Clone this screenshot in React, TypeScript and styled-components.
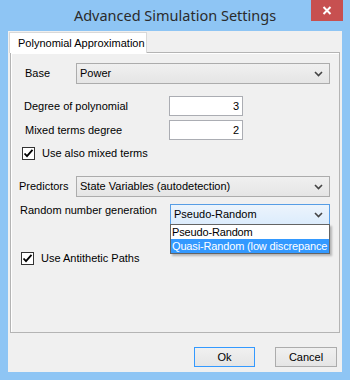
import React from "react";
import styled, { createGlobalStyle } from "styled-components";

const Global = createGlobalStyle`
  html, body { margin: 0; padding: 0; background: #8cc4f4; }
  body { font-family: "Liberation Sans", Arial, sans-serif; font-size: 11px; color: #000; }
  * { box-sizing: border-box; }
`;

const Window = styled.div`
  width: 350px;
  height: 380px;
  background: #8ec5f4;
  padding: 0 8px 8px 8px;
  display: flex;
  flex-direction: column;
`;

const TitleBar = styled.div`
  height: 31px;
  display: grid;
  grid-template-columns: 32px 1fr 32px;
  align-items: start;
`;

const Title = styled.div`
  grid-column: 2;
  text-align: center;
  font-family: "Noto Sans", "Open Sans", sans-serif;
  font-size: 14.5px;
  line-height: 20px;
  padding-top: 5px;
  color: #2b2b2b;
  white-space: nowrap;
`;

const CloseButton = styled.div`
  grid-column: 3;
  height: 21px;
  width: 32px;
  margin-left: 1px;
  background: #c75050;
  display: flex;
  align-items: center;
  justify-content: center;
`;

const Client = styled.div`
  flex: 1;
  background: #f0f0f0;
  display: flex;
  flex-direction: column;
  padding: 1px 2px 5px 1px;
`;

const TabStrip = styled.div`
  display: flex;
  position: relative;
  z-index: 1;
  margin-bottom: -1px;
`;

const Tab = styled.div`
  width: 138px;
  height: 21px;
  background: #fff;
  border: 1px solid #d9d9d9;
  border-bottom: none;
  padding: 3px 0 0 8px;
  line-height: 14px;
`;

const Panel = styled.div`
  flex: 1;
  margin-left: 1px;
  border: 1px solid #b4b4b4;
  background: #f0f0f0;
  display: flex;
  flex-direction: column;
  box-shadow: inset 1px 1px 0 #fff;
`;

const Row = styled.div<{ $top: number; $left: number; $align?: string }>`
  display: flex;
  align-items: ${(p) => p.$align || "center"};
  margin-top: ${(p) => p.$top}px;
  padding-left: ${(p) => p.$left}px;
  padding-right: 9px;
`;

const Label = styled.div<{ $w: number }>`
  width: ${(p) => p.$w}px;
  flex: none;
  line-height: 13px;
  white-space: nowrap;
`;

const Combo = styled.div<{ $focused?: boolean }>`
  position: relative;
  flex: 1;
  height: 21px;
  border: 1px solid ${(p) => (p.$focused ? "#569de5" : "#acacac")};
  background: ${(p) =>
    p.$focused
      ? "linear-gradient(#ecf4fc, #dcecfc)"
      : "linear-gradient(#f0f0f0, #e5e5e5)"};
  display: flex;
  align-items: center;
  padding: 0 6px 0 3px;
`;

const ComboText = styled.div`
  flex: 1;
  white-space: nowrap;
  overflow: hidden;
  line-height: 13px;
`;

const DropList = styled.div`
  position: absolute;
  top: 100%;
  left: -1px;
  right: -1px;
  border: 1px solid #646464;
  background: #fff;
  box-shadow: 2px 2px 2px rgba(0, 0, 0, 0.25);
  z-index: 2;
`;

const DropItem = styled.div<{ $selected?: boolean }>`
  height: 14px;
  line-height: 14px;
  padding-left: 1px;
  white-space: nowrap;
  overflow: hidden;
  letter-spacing: -0.15px;
  background: ${(p) => (p.$selected ? "#3399ff" : "#fff")};
  color: ${(p) => (p.$selected ? "#fff" : "#000")};
`;

const TextBox = styled.div`
  width: 74px;
  height: 20px;
  border: 1px solid #abadb3;
  background: #fff;
  text-align: right;
  padding: 3px 3px 0 0;
  line-height: 13px;
`;

const CheckBox = styled.div`
  width: 13px;
  height: 13px;
  border: 1px solid #333;
  background: #fff;
  flex: none;
  display: flex;
  align-items: center;
  justify-content: center;
  margin-right: 7px;
`;

const ButtonRow = styled.div`
  display: flex;
  justify-content: flex-end;
  gap: 20px;
  margin-top: 14px;
  padding-right: 3px;
`;

const Button = styled.div<{ $w: number; $default?: boolean }>`
  width: ${(p) => p.$w}px;
  height: 20px;
  border: 1px solid ${(p) => (p.$default ? "#3399ff" : "#acacac")};
  background: linear-gradient(#f0f0f0, #e5e5e5);
  display: flex;
  align-items: center;
  justify-content: center;
  line-height: 13px;
`;

const Chevron = () => (
  <svg width="9" height="6" viewBox="0 0 9 6">
    <polyline points="1,1 4.5,4.5 8,1" fill="none" stroke="#444" strokeWidth="1.6" />
  </svg>
);

const Check = () => (
  <svg width="11" height="11" viewBox="0 0 11 11">
    <path d="M1.5 5.5 L4 8.2 L9.5 1.8" fill="none" stroke="#000" strokeWidth="1.8" />
  </svg>
);

export default function App() {
  return (
    <>
      <Global />
      <Window>
        <TitleBar>
          <Title>Advanced Simulation Settings</Title>
          <CloseButton>
            <svg width="10" height="9" viewBox="0 0 10 9">
              <path d="M1.5 1 L8.5 8 M8.5 1 L1.5 8" stroke="#fff" strokeWidth="2" />
            </svg>
          </CloseButton>
        </TitleBar>
        <Client>
          <TabStrip>
            <Tab>Polynomial Approximation</Tab>
          </TabStrip>
          <Panel>
            <Row $top={10} $left={14}>
              <Label $w={51}>Base</Label>
              <Combo>
                <ComboText>Power</ComboText>
                <Chevron />
              </Combo>
            </Row>
            <Row $top={12} $left={13}>
              <Label $w={145}>Degree of polynomial</Label>
              <TextBox>3</TextBox>
            </Row>
            <Row $top={4} $left={14}>
              <Label $w={144}>Mixed terms degree</Label>
              <TextBox>2</TextBox>
            </Row>
            <Row $top={7} $left={11}>
              <CheckBox>
                <Check />
              </CheckBox>
              <Label $w={200}>Use also mixed terms</Label>
            </Row>
            <Row $top={16} $left={8}>
              <Label $w={57}>Predictors</Label>
              <Combo>
                <ComboText>State Variables (autodetection)</ComboText>
                <Chevron />
              </Combo>
            </Row>
            <Row $top={7} $left={9} $align="flex-start">
              <Label $w={150}>Random number generation</Label>
              <Combo $focused>
                <ComboText>Pseudo-Random</ComboText>
                <Chevron />
                <DropList>
                  <DropItem>Pseudo-Random</DropItem>
                  <DropItem $selected>Quasi-Random (low discrepance</DropItem>
                </DropList>
              </Combo>
            </Row>
            <Row $top={27} $left={10}>
              <CheckBox>
                <Check />
              </CheckBox>
              <Label $w={200}>Use Antithetic Paths</Label>
            </Row>
          </Panel>
          <ButtonRow>
            <Button $w={61} $default>Ok</Button>
            <Button $w={62}>Cancel</Button>
          </ButtonRow>
        </Client>
      </Window>
    </>
  );
}
